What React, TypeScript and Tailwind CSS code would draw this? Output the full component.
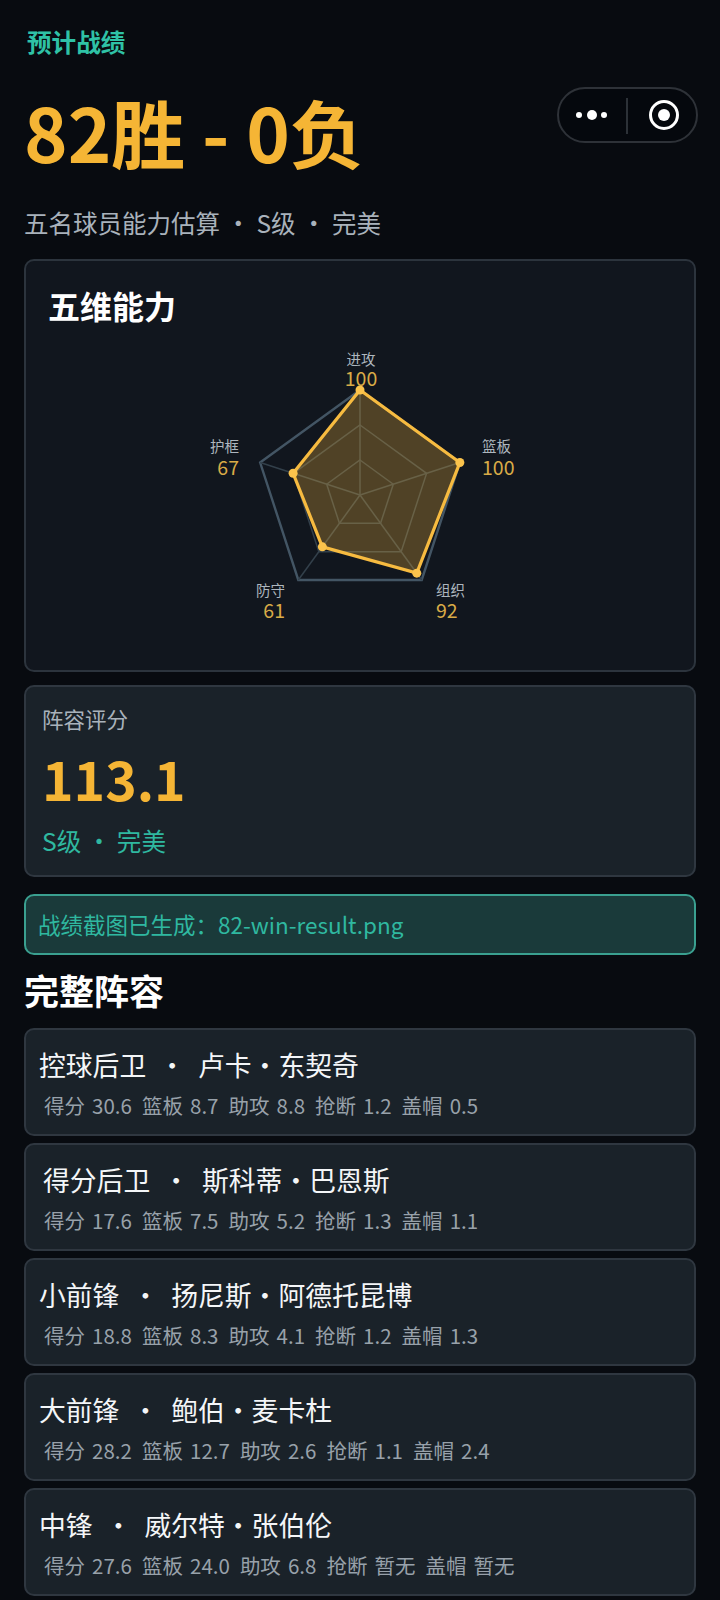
const rows = [
  { ml: "ml-0", title: "控球后卫 · 卢卡·东契奇", stats: ["得分 30.6", "篮板 8.7", "助攻 8.8", "抢断 1.2", "盖帽 0.5"] },
  { ml: "ml-1", title: "得分后卫 · 斯科蒂·巴恩斯", stats: ["得分 17.6", "篮板 7.5", "助攻 5.2", "抢断 1.3", "盖帽 1.1"] },
  { ml: "ml-0", title: "小前锋 · 扬尼斯·阿德托昆博", stats: ["得分 18.8", "篮板 8.3", "助攻 4.1", "抢断 1.2", "盖帽 1.3"] },
  { ml: "ml-0", title: "大前锋 · 鲍伯·麦卡杜", stats: ["得分 28.2", "篮板 12.7", "助攻 2.6", "抢断 1.1", "盖帽 2.4"] },
  { ml: "ml-0", title: "中锋 · 威尔特·张伯伦", stats: ["得分 27.6", "篮板 24.0", "助攻 6.8", "抢断 暂无", "盖帽 暂无"] },
];

const cx = 170;
const cy = 155;
const R = 105;
const vals = [100, 100, 92, 61, 67];
const pt = (i: number, r: number) => {
  const a = (-90 + 72 * i) * (Math.PI / 180);
  return [cx + r * Math.cos(a), cy + r * Math.sin(a)];
};
const ring = (r: number) => [0, 1, 2, 3, 4].map((i) => pt(i, r).join(",")).join(" ");
const labels: { n: string; v: string; x: number; y: number; vy: number; a: "middle" | "start" | "end" }[] = [
  { n: "进攻", v: "100", x: 171, y: 25, vy: 46, a: "middle" },
  { n: "篮板", v: "100", x: 292, y: 112, vy: 135, a: "start" },
  { n: "组织", v: "92", x: 246, y: 256, vy: 278, a: "start" },
  { n: "防守", v: "61", x: 95, y: 256, vy: 278, a: "end" },
  { n: "护框", v: "67", x: 49, y: 112, vy: 135, a: "end" },
];

function Radar() {
  return (
    <svg width="340" height="300" viewBox="0 0 340 300" className="block">
      {[R / 3, (2 * R) / 3].map((r) => (
        <polygon key={r} points={ring(r)} fill="none" stroke="#33404b" strokeWidth="1.5" />
      ))}
      <polygon points={ring(R)} fill="none" stroke="#435564" strokeWidth="2.4" />
      {[0, 1, 2, 3, 4].map((i) => {
        const p = pt(i, R);
        return <line key={i} x1={cx} y1={cy} x2={p[0]} y2={p[1]} stroke="#33404b" strokeWidth="1.5" />;
      })}
      <polygon
        points={vals.map((v, i) => pt(i, (R * v) / 100).join(",")).join(" ")}
        fill="#f5b83d"
        fillOpacity="0.28"
        stroke="#f7bb40"
        strokeWidth="3.2"
      />
      {vals.map((v, i) => {
        const p = pt(i, (R * v) / 100);
        return <circle key={i} cx={p[0]} cy={p[1]} r="4.5" fill="#fbc34c" />;
      })}
      {labels.map((l) => (
        <g key={l.n} textAnchor={l.a}>
          <text x={l.x} y={l.y} fontSize="14.5" fill="#aeb6be">{l.n}</text>
          <text x={l.x} y={l.vy} fontSize="19.5" fill="#d9ab47">{l.v}</text>
        </g>
      ))}
    </svg>
  );
}

export default function App() {
  return (
    <div
      className="relative h-[1600px] w-[720px] overflow-hidden bg-[#080b10] px-6 text-white"
      style={{ fontFamily: '"Noto Sans CJK SC", "Noto Sans", sans-serif' }}
    >
      <div className="pt-[24px] pl-[3px] text-[24.6px] leading-[34px] font-bold text-[#2fc2a6]">预计战绩</div>
      <div className="mt-[28px] text-[74px] leading-[90px] font-bold text-[#f5b535]">82胜 - 0负</div>
      <div className="mt-[30px] text-[24.5px] leading-[34px] text-[#a9b2bb] [word-spacing:0.5px]">五名球员能力估算 · S级 · 完美</div>

      <section className="mt-[19px] h-[413px] rounded-[10px] border-2 border-[#2c343d] bg-[#11161e] px-[22px] pt-[21px]">
        <h2 className="text-[32px] leading-[46px] font-bold text-white">五维能力</h2>
        <div className="mt-[12px] ml-[142px]">
          <Radar />
        </div>
      </section>

      <section className="mt-[13px] h-[192px] rounded-[10px] border-2 border-[#2f3740] bg-[#1a2229] px-[16px] pt-[16px]">
        <div className="text-[21.5px] leading-[32px] text-[#a9b2bb]">阵容评分</div>
        <div className="mt-[7px] text-[53.5px] leading-[72px] font-bold text-[#f5b535]">113.1</div>
        <div className="mt-[9px] text-[24.6px] leading-[34px] text-[#2fb8a0]">S级 · 完美</div>
      </section>

      <section className="mt-[17px] flex h-[61px] items-center rounded-[10px] border-2 border-[#3aa090] bg-[#1a3a3a] px-[12px] text-[22.5px] text-[#2fb8a0]">
        {"战绩截图已生成\uFF1A82-win-result.png"}
      </section>

      <h2 className="mt-[12px] text-[35px] leading-[46px] font-bold text-white">完整阵容</h2>

      <div className="mt-[15px] flex flex-col gap-[7px]">
        {rows.map((r) => (
          <div key={r.title} className="h-[108px] rounded-[10px] border-2 border-[#2f3740] bg-[#1a2229] px-[13px] pt-[16px]">
            <div className={`${r.ml} text-[26.8px] leading-[38px] text-[#f4f6f8] [word-spacing:6.5px]`}>{r.title}</div>
            <div className="mt-[6px] ml-[5px] flex gap-[10px] text-[20.5px] leading-[30px] text-[#98a1aa] [word-spacing:2.5px]">
              {r.stats.map((s) => (
                <span key={s}>{s}</span>
              ))}
            </div>
          </div>
        ))}
      </div>

      <div className="absolute top-[87px] left-[557px] flex h-[56px] w-[141px] items-center rounded-full border-2 border-[#2e3238] bg-[#05080d]">
        <svg width="137" height="52" viewBox="0 0 137 52" fill="none">
          <circle cx="20" cy="26" r="3" fill="#fff" />
          <circle cx="33" cy="26" r="5" fill="#fff" />
          <circle cx="45" cy="26" r="3" fill="#fff" />
          <line x1="68" y1="9" x2="68" y2="45" stroke="#3a3f46" strokeWidth="1.5" />
          <circle cx="105" cy="26" r="13.5" stroke="#fff" strokeWidth="3" />
          <circle cx="105" cy="26" r="6" fill="#fff" />
        </svg>
      </div>
    </div>
  );
}
